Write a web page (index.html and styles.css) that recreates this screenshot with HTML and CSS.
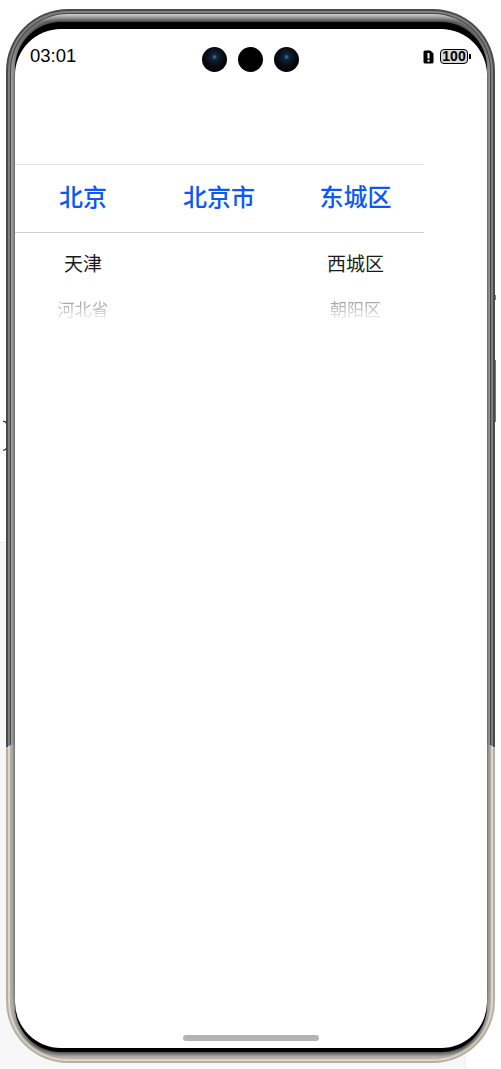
FILE: index.html
```html
<!DOCTYPE html>
<html lang="en">
<head>
    <meta charset="UTF-8">
    <meta name="viewport" content="width=device-width, initial-scale=1.0">
    <title>Address picker</title>
    <link rel="stylesheet" href="styles.css">
</head>
<body>

<div class="backdrop">
    <span class="backdrop-left"></span>
    <span class="backdrop-bottom"></span>
    <svg class="backdrop-mark" width="4" height="32" viewBox="0 0 4 32">
        <path d="M0 1l2.500 1 1.500 2.500" fill="none" stroke="#3a2a1a" stroke-width="1.200"/>
        <path d="M4 27l-1.500 2.500-2.500 1" fill="none" stroke="#3a2a1a" stroke-width="1.200"/>
    </svg>
</div>

<div class="phone">
    <span class="side-button power"></span>
    <span class="side-button volume"></span>
    <div class="rim">
        <div class="band">
            <div class="bezel">
                <div class="screen">
                    <div class="status-bar">
                        <span class="time">03:01</span>
                        <div class="cameras">
                            <span class="camera lens"></span>
                            <span class="camera"></span>
                            <span class="camera lens"></span>
                        </div>
                        <div class="status-icons">
                            <svg class="alert" width="11" height="14" viewBox="0 0 11 14">
                                <path d="M2 0.500h5.500l3 3v8.500a1.500 1.500 0 0 1-1.500 1.500h-7a1.500 1.500 0 0 1-1.500-1.500v-10a1.500 1.500 0 0 1 1.500-1.500z" fill="#000"/>
                                <rect x="4.500" y="3" width="2" height="5.500" fill="#fff"/>
                                <rect x="4.500" y="9.700" width="2" height="2" fill="#fff"/>
                            </svg>
                            <span class="battery">100</span>
                            <span class="battery-tip"></span>
                        </div>
                    </div>

                    <div class="picker">
                        <div class="picker-row selected">
                            <span>北京</span>
                            <span>北京市</span>
                            <span>东城区</span>
                        </div>
                        <div class="picker-row near">
                            <span>天津</span>
                            <span></span>
                            <span>西城区</span>
                        </div>
                        <div class="picker-row far">
                            <span>河北省</span>
                            <span></span>
                            <span>朝阳区</span>
                        </div>
                    </div>

                    <div class="home-bar"></div>
                </div>
            </div>
        </div>
    </div>
</div>

</body>
</html>
```

FILE: styles.css
```css
html, body {
    margin: 0;
    padding: 0;
}
body {
    position: relative;
    width: 501px;
    height: 1069px;
    overflow: hidden;
    background-color: #fff;
    font-family: "Liberation Sans", "Noto Sans CJK SC", sans-serif;
}
.backdrop-left {
    position: absolute;
    left: 0;
    top: 542px;
    width: 20px;
    height: 527px;
    background-color: #f7f7f7;
    border-top: 1px solid #eee;
    box-sizing: border-box;
}
.backdrop-bottom {
    position: absolute;
    left: 0;
    top: 1040px;
    width: 465px;
    height: 29px;
    background-color: #f7f7f7;
    border-right: 1px solid #eee;
}
.backdrop-mark {
    position: absolute;
    left: 3px;
    top: 420px;
}
.phone {
    position: relative;
    box-sizing: border-box;
    margin: 9px 0 0 6px;
    width: 489px;
    height: 1054px;
    padding: 2px;
    border-radius: 62px;
    background: linear-gradient(to bottom, #4a4a4a 0, #4a4a4a 70%, #b7b0a2 70%, #b7b0a2 100%);
}
.side-button {
    position: absolute;
    right: -1px;
    width: 1px;
    background-color: #777;
}
.side-button.power {
    top: 351px;
    height: 62px;
}
.side-button.volume {
    top: 286px;
    height: 5px;
}
.rim {
    height: 100%;
    box-sizing: border-box;
    padding: 2px;
    border-radius: 60px;
    background: linear-gradient(to bottom, #808080 0, #808080 70%, #ddd8cc 70%, #ddd8cc 100%);
}
.band {
    height: 100%;
    box-sizing: border-box;
    padding: 1px;
    border-radius: 58px;
    background: linear-gradient(to bottom, #484848 0, #484848 70%, #b9b2a3 70%, #b9b2a3 100%);
}
.bezel {
    height: 100%;
    box-sizing: border-box;
    padding: 15px 3px 10px 4px;
    border-radius: 57px;
    background: linear-gradient(to bottom, #d0d0d0 0, #808080 8px, #a8a8a8 70px, #a8a8a8 70%, #b4b6b8 70%, #b4b6b8 calc(100% - 30px), #909090 calc(100% - 10px), #c4c4c4 100%);
}
.screen {
    position: relative;
    height: 100%;
    border-radius: 46px;
    background-color: #fff;
    overflow: hidden;
    box-shadow: 0 -7px 0 #000, 0 4px 0 #000, 0 -10px 6px -2px rgba(0, 0, 0, 0.75), 0 7px 5px -1px rgba(0, 0, 0, 0.65);
}
.status-bar {
    display: grid;
    grid-template-columns: 1fr auto 1fr;
    align-items: start;
    height: 52px;
    padding: 0 16px 0 15px;
}
.time {
    margin-top: 16px;
    font-size: 18.500px;
    line-height: 21px;
    color: #000;
}
.cameras {
    display: flex;
    gap: 11px;
    margin-top: 18px;
    margin-left: -1px;
}
.camera {
    width: 25px;
    height: 25px;
    border-radius: 50%;
    background-color: #000;
}
.camera.lens {
    background: radial-gradient(circle at 50% 40%, #3b7fb8 0, #12233a 14%, #080c14 45%, #000 80%);
}
.status-icons {
    display: flex;
    align-items: center;
    justify-self: end;
    margin-top: 20px;
}
.alert {
    margin-right: 6px;
}
.battery {
    box-sizing: border-box;
    width: 28px;
    height: 15px;
    border: 1px solid #000;
    border-radius: 4px;
    background-color: #d8d8d8;
    font-size: 14px;
    font-weight: bold;
    line-height: 13px;
    text-align: center;
    color: #000;
}
.battery-tip {
    width: 2px;
    height: 5px;
    margin-left: 1px;
    background-color: #000;
}
.picker {
    width: 409px;
    margin-top: 83px;
}
.picker-row {
    display: grid;
    grid-template-columns: 136px 136px 137px;
    text-align: center;
}
.picker-row.selected {
    height: 67px;
    border-top: 1px solid #e0e0e0;
    border-bottom: 1px solid #d0d0d0;
    font-size: 24px;
    font-weight: 500;
    line-height: 65px;
    color: #0a59f7;
}
.picker-row.near {
    height: 46px;
    margin-top: 9px;
    font-size: 19px;
    line-height: 46px;
    color: #1a1a1a;
}
.picker-row.far {
    height: 30px;
    margin-top: 8px;
    font-size: 17px;
    line-height: 30px;
    background: linear-gradient(to bottom, #a8a8a8 25%, #f5f5f5 80%);
    -webkit-background-clip: text;
    background-clip: text;
    color: transparent;
}
.home-bar {
    position: absolute;
    left: 168px;
    bottom: 7px;
    width: 136px;
    height: 6px;
    border-radius: 3px;
    background-color: #b4b4b4;
}
```
